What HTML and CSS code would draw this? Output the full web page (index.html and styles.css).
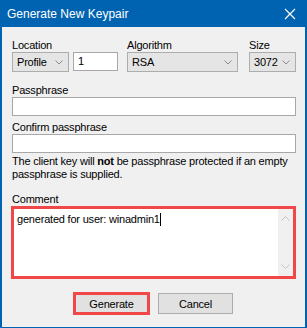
FILE: index.html
```html
<!DOCTYPE html>
<html>
	<head>
		<meta charset="utf-8">
		<title>Generate New Keypair</title>
		<link rel="stylesheet" href="styles.css">
	</head>
	<body>
		<div class="window">
			<div class="titlebar">
				<span class="title">Generate New Keypair</span>
				<svg class="close-icon" width="12" height="12" viewBox="0 0 12 12">
					<path d="M1 1 L11 11 M11 1 L1 11" stroke="#ffffff" stroke-width="1.2" fill="none"/>
				</svg>
			</div>

			<div class="content">
				<div class="key-grid">
					<div class="lbl lbl-location">Location</div>
					<div class="lbl lbl-algorithm">Algorithm</div>
					<div class="lbl lbl-size">Size</div>

					<div class="combo combo-location">
						<span>Profile</span>
						<svg class="chevron" width="8" height="5" viewBox="0 0 8 5"><path d="M0.5 0.5 L4 4 L7.5 0.5" stroke="#8a8a8a" fill="none"/></svg>
					</div>
					<div class="field field-number">1</div>
					<div class="combo combo-algorithm">
						<span>RSA</span>
						<svg class="chevron" width="8" height="5" viewBox="0 0 8 5"><path d="M0.5 0.5 L4 4 L7.5 0.5" stroke="#8a8a8a" fill="none"/></svg>
					</div>
					<div class="combo combo-size">
						<span>3072</span>
						<svg class="chevron" width="8" height="5" viewBox="0 0 8 5"><path d="M0.5 0.5 L4 4 L7.5 0.5" stroke="#8a8a8a" fill="none"/></svg>
					</div>
				</div>

				<div class="lbl lbl-passphrase">Passphrase</div>
				<div class="field field-wide"></div>

				<div class="lbl lbl-confirm">Confirm passphrase</div>
				<div class="field field-wide"></div>

				<p class="note">The client key will <b>not</b> be passphrase protected if an empty<br>passphrase is supplied.</p>

				<div class="lbl lbl-comment">Comment</div>
				<div class="comment-box">
					<div class="comment-text">generated for user: winadmin1<span class="caret"></span></div>
					<div class="scrollbar">
						<svg width="9" height="5" viewBox="0 0 9 5"><path d="M0.5 4.5 L4.5 0.5 L8.5 4.5" stroke="#c2c2c2" fill="none"/></svg>
						<svg width="9" height="5" viewBox="0 0 9 5"><path d="M0.5 0.5 L4.5 4.5 L8.5 0.5" stroke="#c2c2c2" fill="none"/></svg>
					</div>
				</div>

				<div class="buttons">
					<div class="button button-generate">Generate</div>
					<div class="button">Cancel</div>
				</div>
			</div>
		</div>
	</body>
</html>
```

FILE: styles.css
```css
body {
	margin: 0;
	font-family: "Liberation Sans", Arial, sans-serif;
	font-size: 11px;
	letter-spacing: -0.2px;
	color: #000000;
}

.window {
	width: 307px;
	height: 328px;
	box-sizing: border-box;
	border: 2px solid #0063b1;
	border-top: none;
	border-bottom-width: 1px;
	background: #f0f0f0;
	display: flex;
	flex-direction: column;
}

.titlebar {
	height: 27px;
	margin: 0 -2px;
	background: #0063b1;
	color: #ffffff;
	display: flex;
	align-items: center;
	justify-content: space-between;
	padding: 0 11px 0 7px;
	font-size: 12px;
	letter-spacing: 0;
}

.close-icon {
	margin-top: 1px;
}

.content {
	padding: 12px 9px 0 10px;
	display: flex;
	flex-direction: column;
}

.lbl {
	height: 13px;
	line-height: 13px;
}

.key-grid {
	display: grid;
	grid-template-columns: 57px 49px 120px 58px;
	grid-template-rows: 13px 20px;
}

.lbl-location {
	grid-column: 1;
}

.lbl-algorithm {
	grid-column: 3;
	margin-left: 9px;
}

.lbl-size {
	grid-column: 4;
	margin-left: 11px;
}

.combo {
	box-sizing: border-box;
	height: 20px;
	background: #e5e5e5;
	border: 1px solid #adadad;
	display: flex;
	align-items: center;
	justify-content: space-between;
	padding: 0 5px 0 4px;
}

.chevron {
	flex-shrink: 0;
}

.combo-location {
	grid-column: 1;
}

.field-number {
	grid-column: 2;
	margin-left: 4px;
	height: 19px;
	line-height: 17px;
	padding-left: 4px;
}

.combo-algorithm {
	grid-column: 3;
	margin-left: 9px;
}

.combo-size {
	grid-column: 4;
	margin-left: 11px;
}

.field {
	box-sizing: border-box;
	background: #ffffff;
	border: 1px solid #a8a8a8;
}

.field-wide {
	height: 19px;
}

.lbl-passphrase {
	margin-top: 12px;
}

.lbl-confirm {
	margin-top: 5px;
}

.note {
	margin: 2px 0 0 0;
	line-height: 13px;
	white-space: nowrap;
}

.lbl-comment {
	margin-top: 12px;
}

.comment-box {
	box-sizing: border-box;
	height: 73px;
	margin-left: -1px;
	border: 3px solid #f04848;
	background: #ffffff;
	display: flex;
}

.comment-text {
	flex: 1;
	padding: 3px 0 0 3px;
	line-height: 14px;
}

.caret {
	display: inline-block;
	width: 1px;
	height: 13px;
	background: #000000;
	vertical-align: -3px;
}

.scrollbar {
	width: 15px;
	background: #f0f0f0;
	display: flex;
	flex-direction: column;
	align-items: center;
	justify-content: space-between;
	padding: 7px 0 7px 0;
}

.buttons {
	display: flex;
	justify-content: center;
	gap: 8px;
	margin-top: 14px;
	padding-right: 2px;
}

.button {
	box-sizing: border-box;
	width: 75px;
	height: 21px;
	background: #e1e1e1;
	border: 1px solid #adadad;
	display: flex;
	align-items: center;
	justify-content: center;
}

.button-generate {
	width: 77px;
	height: 23px;
	margin-top: -1px;
	border: 3px solid #f04848;
}
```
